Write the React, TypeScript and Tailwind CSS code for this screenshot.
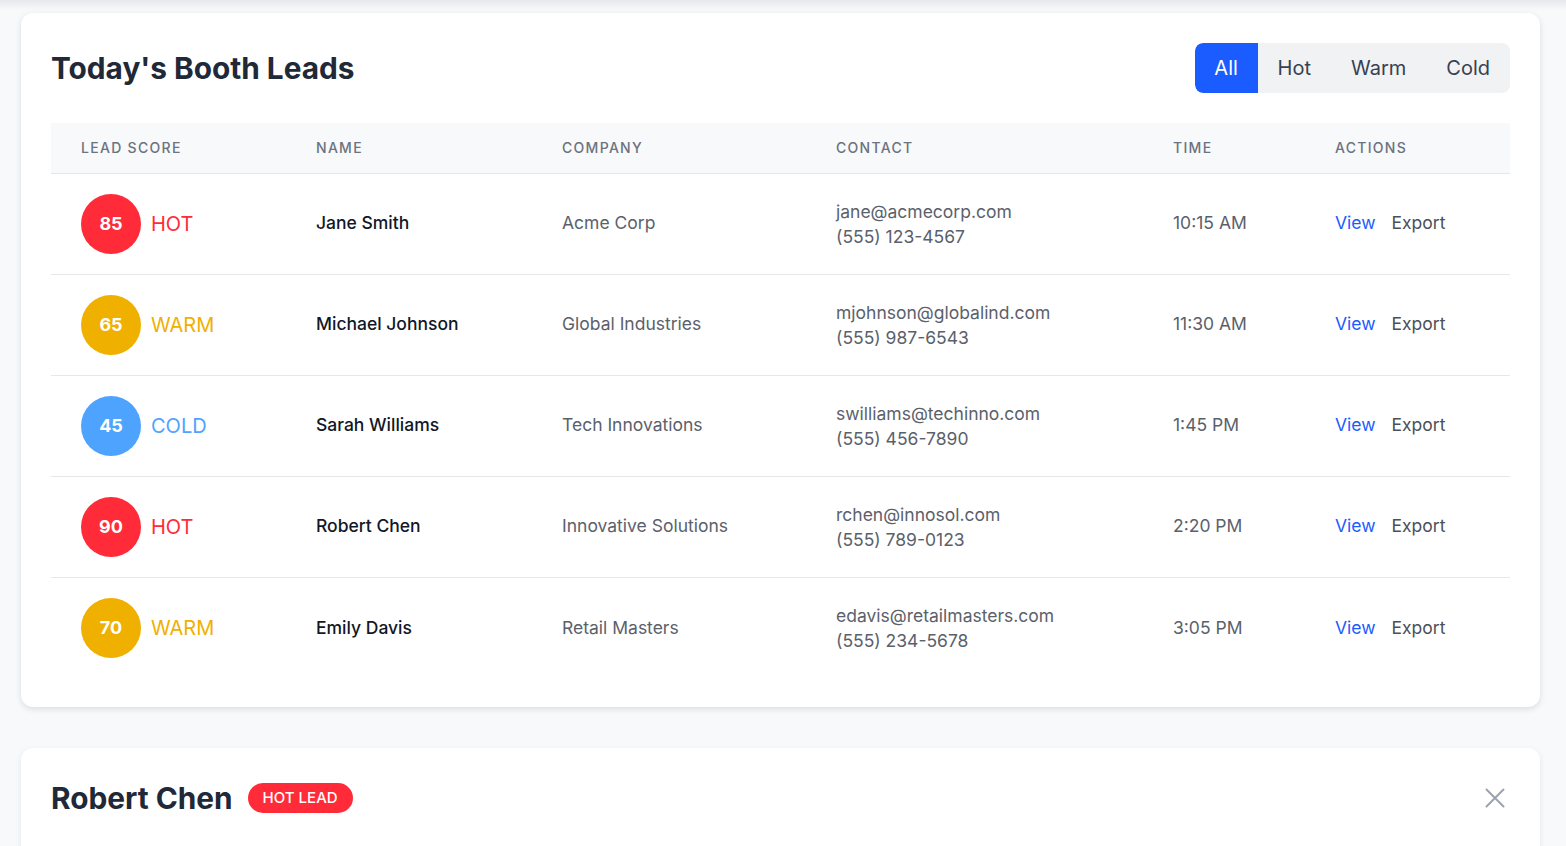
type Tier = 'HOT' | 'WARM' | 'COLD'

interface Lead {
  score: number
  tier: Tier
  name: string
  company: string
  email: string
  phone: string
  time: string
}

const LEADS: Lead[] = [
  { score: 85, tier: 'HOT', name: 'Jane Smith', company: 'Acme Corp', email: 'jane@acmecorp.com', phone: '(555) 123-4567', time: '10:15 AM' },
  { score: 65, tier: 'WARM', name: 'Michael Johnson', company: 'Global Industries', email: 'mjohnson@globalind.com', phone: '(555) 987-6543', time: '11:30 AM' },
  { score: 45, tier: 'COLD', name: 'Sarah Williams', company: 'Tech Innovations', email: 'swilliams@techinno.com', phone: '(555) 456-7890', time: '1:45 PM' },
  { score: 90, tier: 'HOT', name: 'Robert Chen', company: 'Innovative Solutions', email: 'rchen@innosol.com', phone: '(555) 789-0123', time: '2:20 PM' },
  { score: 70, tier: 'WARM', name: 'Emily Davis', company: 'Retail Masters', email: 'edavis@retailmasters.com', phone: '(555) 234-5678', time: '3:05 PM' },
]

const TIER_STYLE: Record<Tier, { bg: string; text: string }> = {
  HOT: { bg: 'bg-[#ff2b38]', text: 'text-[#ff2b38]' },
  WARM: { bg: 'bg-[#f0b000]', text: 'text-[#f0b000]' },
  COLD: { bg: 'bg-[#4ea3ff]', text: 'text-[#4ea3ff]' },
}

const FILTERS = ['All', 'Hot', 'Warm', 'Cold']

export default function App() {
  return (
    <div className="min-h-screen bg-[#f8f9fb] font-['Inter',sans-serif] text-[#1f2937]">
      <div className="h-[10px] bg-gradient-to-b from-[#e6e8ec] to-transparent" />
      <div className="pl-[21px] pr-[26px] pt-[3px] pb-10 flex flex-col gap-[41px]">
        <section className="bg-white rounded-xl shadow-[0_2px_6px_rgba(0,0,0,0.12)] px-[30px] pt-[30px] pb-[29px]">
          <div className="flex items-center justify-between h-[50px] mb-[30px]">
            <h2 className="text-[29.8px] font-bold text-[#1f2937]">Today's Booth Leads</h2>
            <div className="flex bg-[#f1f2f4] rounded-lg overflow-hidden h-[50px]">
              {FILTERS.map((f, i) => (
                <button
                  key={f}
                  className={`text-[20px] h-full ${i === 0 ? 'bg-[#1a5cff] text-white w-[63px] rounded-l-lg' : 'text-[#374151] px-5'}`}
                >
                  {f}
                </button>
              ))}
            </div>
          </div>

          <table className="w-full border-collapse">
            <thead>
              <tr className="bg-[#f8f9fa] h-[50px] border-b border-[#e5e7eb] text-left text-[14px] font-medium tracking-[1.3px] text-[#6b7280] uppercase">
                <th className="w-[235px] pl-[30px] font-medium">Lead Score</th>
                <th className="w-[246px] pl-[30px] font-medium">Name</th>
                <th className="w-[274px] pl-[30px] font-medium">Company</th>
                <th className="w-[337px] pl-[30px] font-medium">Contact</th>
                <th className="w-[162px] pl-[30px] font-medium">Time</th>
                <th className="pl-[30px] font-medium">Actions</th>
              </tr>
            </thead>
            <tbody>
              {LEADS.map((l, idx) => {
                const t = TIER_STYLE[l.tier]
                return (
                  <tr key={l.name} className={`h-[101px] ${idx < LEADS.length - 1 ? 'border-b border-[#e5e7eb]' : ''}`}>
                    <td className="pl-[30px]">
                      <div className="flex items-center gap-[10px]">
                        <span className={`w-[60px] h-[60px] rounded-full ${t.bg} flex items-center justify-center text-white font-bold text-[18px]`}>
                          {l.score}
                        </span>
                        <span className={`text-[20px] ${t.text}`}>{l.tier}</span>
                      </div>
                    </td>
                    <td className="pl-[30px] text-[17.5px] font-medium text-[#111827]">{l.name}</td>
                    <td className="pl-[30px] text-[17.5px] text-[#5b616b]">{l.company}</td>
                    <td className="pl-[30px] text-[17.5px] text-[#5b616b] leading-[25px]">
                      <div>{l.email}</div>
                      <div>{l.phone}</div>
                    </td>
                    <td className="pl-[30px] text-[17.5px] text-[#5b616b]">{l.time}</td>
                    <td className="pl-[30px] text-[17.5px]">
                      <div className="flex gap-4">
                        <button className="text-[#1a5cff]">View</button>
                        <button className="text-[#4b5058]">Export</button>
                      </div>
                    </td>
                  </tr>
                )
              })}
            </tbody>
          </table>
        </section>

        <section className="bg-white rounded-xl shadow-[0_2px_6px_rgba(0,0,0,0.08)] px-[30px] pt-[30px] pb-[30px]">
          <div className="flex items-center justify-between h-[40px]">
            <div className="flex items-center gap-[15px]">
              <h2 className="text-[29.8px] font-bold text-[#1f2937]">Robert Chen</h2>
              <span className="bg-[#ff2b38] text-white text-[15px] font-medium rounded-full px-[15px] h-[30px] flex items-center">
                HOT LEAD
              </span>
            </div>
            <button className="text-[#9ca3af] mr-[5px]">
              <svg width="20" height="20" viewBox="0 0 20 20" fill="none" stroke="currentColor" strokeWidth="2" strokeLinecap="round">
                <path d="M1.5 1.5 L18.5 18.5 M18.5 1.5 L1.5 18.5" />
              </svg>
            </button>
          </div>
          <div className="h-[200px]" />
        </section>
      </div>
    </div>
  )
}
